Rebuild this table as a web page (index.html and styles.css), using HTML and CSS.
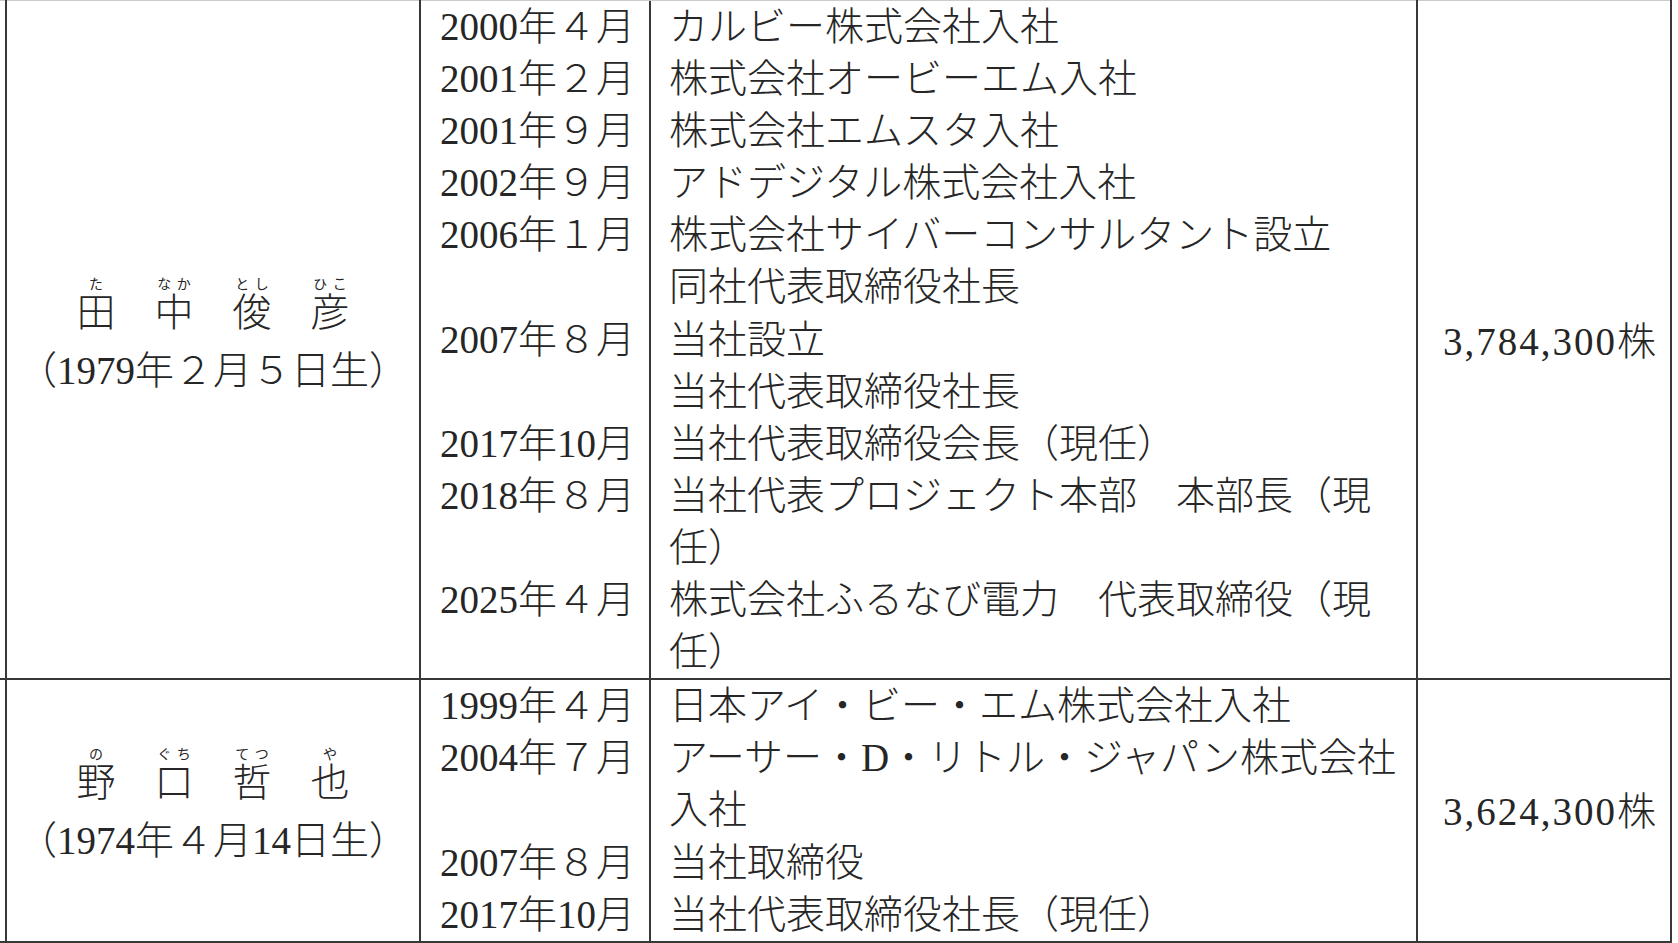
FILE: index.html
```html
<!DOCTYPE html>
<html lang="ja">
<head>
<meta charset="utf-8">
<title>役員の状況</title>
<link rel="stylesheet" href="styles.css">
</head>
<body>
<table class="officers">
  <colgroup>
    <col class="c-edge">
    <col class="c-name">
    <col class="c-career">
    <col class="c-shares">
  </colgroup>
  <tbody>
    <tr>
      <td class="edge"></td>
      <td class="name-cell">
        <div class="name"><ruby>田<rt>た</rt></ruby>　<ruby>中<rt>なか</rt></ruby>　<ruby>俊<rt>とし</rt></ruby>　<ruby>彦<rt>ひこ</rt></ruby></div>
        <div class="birth">（1979年２月５日生）</div>
      </td>
      <td class="career-cell">
        <div class="career">
          <div class="date">2000年４月</div><div class="desc">カルビー株式会社入社</div>
          <div class="date">2001年２月</div><div class="desc">株式会社オービーエム入社</div>
          <div class="date">2001年９月</div><div class="desc">株式会社エムスタ入社</div>
          <div class="date">2002年９月</div><div class="desc">アドデジタル株式会社入社</div>
          <div class="date">2006年１月</div><div class="desc">株式会社サイバーコンサルタント設立<br>同社代表取締役社長</div>
          <div class="date">2007年８月</div><div class="desc">当社設立<br>当社代表取締役社長</div>
          <div class="date">2017年10月</div><div class="desc">当社代表取締役会長（現任）</div>
          <div class="date">2018年８月</div><div class="desc">当社代表プロジェクト本部　本部長（現任）</div>
          <div class="date">2025年４月</div><div class="desc">株式会社ふるなび電力　代表取締役（現任）</div>
        </div>
      </td>
      <td class="shares">3,784,300株</td>
    </tr>
    <tr>
      <td class="edge"></td>
      <td class="name-cell">
        <div class="name"><ruby>野<rt>の</rt></ruby>　<ruby>口<rt>ぐち</rt></ruby>　<ruby>哲<rt>てつ</rt></ruby>　<ruby>也<rt>や</rt></ruby></div>
        <div class="birth">（1974年４月14日生）</div>
      </td>
      <td class="career-cell">
        <div class="career">
          <div class="date">1999年４月</div><div class="desc">日本アイ・ビー・エム株式会社入社</div>
          <div class="date">2004年７月</div><div class="desc">アーサー・D・リトル・ジャパン株式会社入社</div>
          <div class="date">2007年８月</div><div class="desc">当社取締役</div>
          <div class="date">2017年10月</div><div class="desc">当社代表取締役社長（現任）</div>
        </div>
      </td>
      <td class="shares">3,624,300株</td>
    </tr>
    <tr class="stub">
      <td class="edge"></td>
      <td></td>
      <td class="career-cell">
        <div class="career">
          <div class="date stub-date"></div><div class="desc"></div>
        </div>
      </td>
      <td></td>
    </tr>
  </tbody>
</table>
</body>
</html>
```

FILE: styles.css
```css
html, body {
  margin: 0;
  padding: 0;
  background: #ffffff;
}

body {
  font-family: "Liberation Serif", "Noto Sans CJK JP", serif;
  font-weight: 300;
  font-size: 39px;
  color: #262626;
}

.officers {
  border-collapse: collapse;
  table-layout: fixed;
  width: 1671px;
}

.c-edge { width: 6px; }
.c-name { width: 414px; }
.c-career { width: 997px; }
.c-shares { width: 254px; }

.officers td {
  border: 2px solid #383838;
  padding: 0;
  vertical-align: middle;
}

.officers tr:first-child > td {
  border-top: 1px solid #cbcbcb;
}

.officers td.edge {
  border-left: none;
}

.officers td.name-cell {
  text-align: center;
  padding-bottom: 6px;
}

.name {
  line-height: 52px;
}

.name rt {
  font-size: 14px;
  font-weight: 400;
  line-height: 1;
}

.birth {
  line-height: 52px;
  margin-top: 6px;
}

.career {
  display: grid;
  grid-template-columns: 230px 1fr;
  line-height: 52.1px;
}

.date {
  box-sizing: border-box;
  border-right: 2px solid #383838;
  padding-left: 5px;
  text-align: center;
  white-space: nowrap;
}

.desc {
  padding-left: 18px;
}

.officers td.shares {
  text-align: right;
  padding-right: 12px;
  padding-bottom: 4px;
  letter-spacing: 2px;
  white-space: nowrap;
}

.officers .stub td {
  border-bottom: none;
}

.stub-date {
  height: 30px;
}
```
